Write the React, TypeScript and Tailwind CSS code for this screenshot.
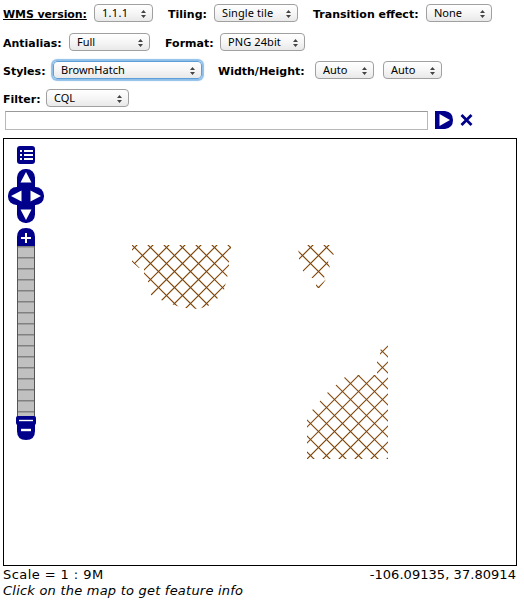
import type { ReactNode } from "react";

const NAVY = "#00008b";

function Label({ children, className }: { children: ReactNode; className: string }) {
  return (
    <span className={`mt-[3px] shrink-0 whitespace-nowrap font-['DejaVu_Sans',sans-serif] text-[11px] font-bold leading-4 ${className}`}>
      {children}
    </span>
  );
}

function Picker({ value, className, focused = false }: { value: string; className: string; focused?: boolean }) {
  const edge = focused
    ? "border-[#5f9fd8] shadow-[0_0_1px_2px_#8fbfe9]"
    : "border-[#a0a0a0]";
  return (
    <button
      className={`flex h-[18px] shrink-0 items-center justify-between rounded-[4px] border bg-linear-to-b from-white via-[#f6f6f6] to-[#e9e9e9] pb-px pl-[7px] pr-[6px] font-['Noto_Sans','Open_Sans',sans-serif] text-[11px] leading-[15px] ${edge} ${className}`}
    >
      <span className="whitespace-nowrap">{value}</span>
      <svg className="relative top-px" width="5" height="8" viewBox="0 0 5 8" fill="#444">
        <path d="M2.5 0 5 3H0zM0 5h5L2.500 8z" />
      </svg>
    </button>
  );
}

const crossings = Array.from({ length: 52 }, (_, i) => -400 + i * 16);

function Features() {
  return (
    <svg className="absolute inset-0" width="512" height="426" viewBox="4 139 512 426">
      <defs>
        <clipPath id="areas">
          <path d="M132 245H231V250L229 262V270L224 290 217 299 208 306 198 309 185 308 177 306 161 300 151 295 150 285 144 275V268H139L132 262Z" />
          <path d="M298 245H330L334 254 328 261 330 268 324 277.500 325.500 280 320 288H316V284L319 279 312 278 303 271 299 259Z" />
          <path d="M388 345V459H307V418L313 409 320 401 328 392 336 385 345 377 352 375H377V361L380 355V350Z" />
        </clipPath>
      </defs>
      <g clipPath="url(#areas)" stroke="#83490c" strokeWidth="1.2">
        {crossings.map((c) => (
          <path key={c} d={`M${c + 134.5} 119.500l400 400M${c + 534.5} 119.500l-400 400`} />
        ))}
      </g>
    </svg>
  );
}

function MapControls() {
  return (
    <svg className="absolute left-[4px] top-[7px]" width="36" height="296" viewBox="8 146 36 296">
      <rect x="17" y="146" width="18" height="18" rx="3" fill={NAVY} />
      <path d="M20 150h2v2h-2zM24 150h9v2h-9zM20 154h2v2h-2zM24 154h9v2h-9zM20 158h2v2h-2zM24 158h9v2h-9z" fill="white" />
      <rect x="17" y="169" width="18" height="54" rx="8.5" fill={NAVY} />
      <rect x="8" y="187" width="36" height="18" rx="8.5" fill={NAVY} />
      <path d="M26 172l5.500 10.500h-11zM26 220l5.500-10.500h-11zM11 196l10.500-5.500v11zM41 196l-10.500-5.500v11z" fill="white" />
      <rect x="17" y="246" width="18" height="176" fill="#c0c0c0" />
      {Array.from({ length: 16 }, (_, i) => (
        <rect key={i} x="17" y={246 + i * 11} width="18" height="1.5" fill="#808080" />
      ))}
      <path d="M17.500 246v176M34.500 246v176" stroke="#555" />
      <path d="M17 246v-9q0-9 9-9t9 9v9z" fill={NAVY} />
      <path d="M21 238h10M26 233v10" stroke="white" strokeWidth="2" />
      <path d="M17 422h18v9q0 9-9 9t-9-9z" fill={NAVY} />
      <rect x="16" y="416" width="20" height="9" rx="2" fill={NAVY} />
      <path d="M19 420.500h14" stroke="white" strokeWidth="1.4" />
      <path d="M21 430h10" stroke="white" strokeWidth="2.4" />
    </svg>
  );
}

export default function App() {
  return (
    <main className="h-[602px] w-[524px] overflow-hidden bg-white pl-[3px] text-black">
      <div className="flex h-[28px] items-start pt-[4px]">
        <Label className="w-[91px] tracking-[-0.1px] underline">WMS version:</Label>
        <Picker value="1.1.1" className="w-[59px] tracking-[0.3px]" />
        <Label className="ml-[15px] w-[46px]">Tiling:</Label>
        <Picker value="Single tile" className="w-[84px] tracking-[0.1px]" />
        <Label className="ml-[15px] w-[113px]">Transition effect:</Label>
        <Picker value="None" className="w-[66px]" />
      </div>
      <div className="flex h-[28px] items-start pt-[5px]">
        <Label className="w-[66px]">Antialias:</Label>
        <Picker value="Full" className="w-[81px]" />
        <Label className="ml-[15px] w-[55px]">Format:</Label>
        <Picker value="PNG 24bit" className="w-[85px] tracking-[0.1px]" />
      </div>
      <div className="flex h-[28px] items-start pt-[5px]">
        <Label className="w-[50px]">Styles:</Label>
        <Picker value="BrownHatch" className="w-[149px]" focused />
        <Label className="ml-[16px] w-[97px]">Width/Height:</Label>
        <Picker value="Auto" className="w-[59px]" />
        <Picker value="Auto" className="ml-[9px] w-[59px]" />
      </div>
      <div className="flex h-[27px] items-start pt-[5px]">
        <Label className="w-[43px]">Filter:</Label>
        <Picker value="CQL" className="w-[83px]" />
      </div>
      <div className="flex h-[27px] items-start pl-[2px]">
        <input className="h-[19px] w-[423px] border border-[#b8b8b8] border-t-[#999] bg-white outline-none" />
        <svg className="ml-[7px]" width="18" height="18" viewBox="0 0 18 18">
          <path d="M0 0h10q8 1 8 9t-8 9H0z" fill={NAVY} />
          <path d="M4.500 3v12L15 9z" fill="white" />
        </svg>
        <svg className="ml-[7px] mt-[3px]" width="13" height="12" viewBox="0 0 13 12">
          <path d="M1.500 1l10 10M11.500 1l-10 10" stroke={NAVY} strokeWidth="2.8" />
        </svg>
      </div>
      <section className="relative h-[428px] w-[514px] border border-black bg-white">
        <Features />
        <MapControls />
      </section>
      <footer className="w-[513px] pt-px font-['DejaVu_Sans',sans-serif] text-[13px] leading-4">
        <div className="flex justify-between">
          <span className="tracking-[0.43px]">Scale = 1 : 9M</span>
          <span className="tracking-[0.05px]">-106.09135, 37.80914</span>
        </div>
        <em className="block tracking-[0.22px]">Click on the map to get feature info</em>
      </footer>
    </main>
  );
}
